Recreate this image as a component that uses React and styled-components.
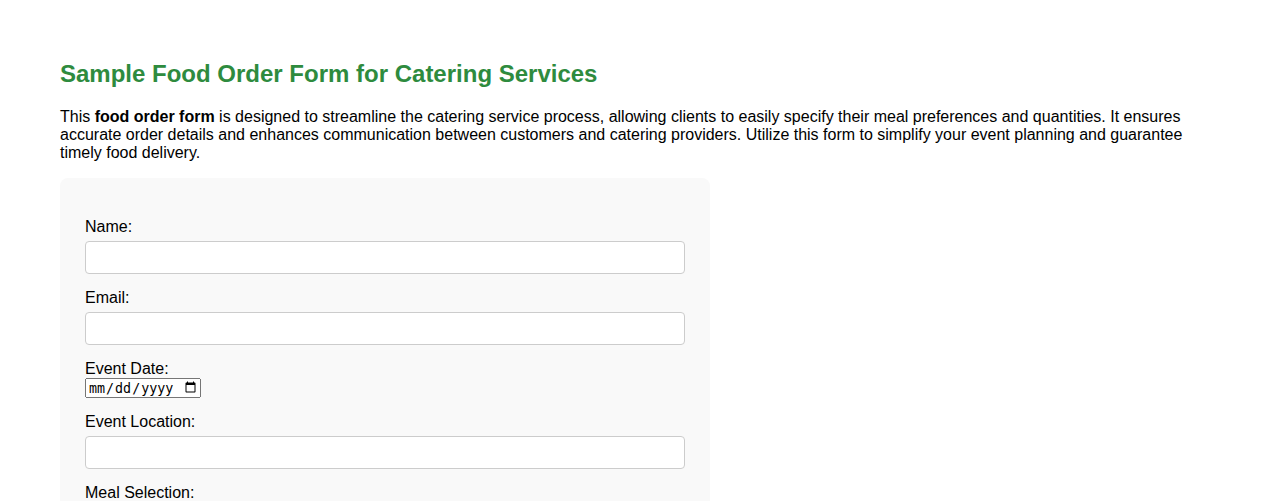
import React from "react";
import styled, { createGlobalStyle } from "styled-components";

const GlobalStyle = createGlobalStyle`
  body {
    margin: 0;
    background: #ffffff;
    font-family: "Liberation Sans", Arial, sans-serif;
    color: #000;
  }
`;

const Page = styled.div`
  padding: 40px 60px;
`;

const Title = styled.h2`
  margin: 20px 0;
  font-size: 24px;
  font-weight: bold;
  color: #2e8b3e;
`;

const Intro = styled.p`
  margin: 16px 0;
  font-size: 16px;
  line-height: normal;
`;

const OrderForm = styled.form`
  max-width: 600px;
  padding: 25px;
  background: #f9f9f9;
  border-radius: 8px;
`;

const Label = styled.label`
  display: block;
  margin: 15px 0 5px;
  font-size: 16px;
`;

const TextInput = styled.input`
  display: block;
  box-sizing: border-box;
  width: 100%;
  height: 33px;
  padding: 8px;
  border: 1px solid #ccc;
  border-radius: 4px;
  background: #fff;
  font-size: 13.33px;
  font-family: "Liberation Sans", Arial, sans-serif;
`;

const DateInput = styled.input`
  display: block;
  margin-top: -5px;
  width: 116px;
  height: 20px;
  box-sizing: border-box;
`;

const Select = styled.select`
  display: block;
  box-sizing: border-box;
  width: 100%;
  height: 33px;
  padding: 8px;
  border: 1px solid #ccc;
  border-radius: 4px;
  background: #fff;
  font-size: 13.33px;
`;

const fields = [
  { id: "name", label: "Name:", type: "text" },
  { id: "email", label: "Email:", type: "email" },
];

export default function App() {
  return (
    <Page>
      <GlobalStyle />
      <Title>Sample Food Order Form for Catering Services</Title>
      <Intro>
        This <b>food order form</b> is designed to streamline the catering service process,
        allowing clients to easily specify their meal preferences and quantities. It ensures
        accurate order details and enhances communication between customers and catering
        providers. Utilize this form to simplify your event planning and guarantee timely food
        delivery.
      </Intro>
      <OrderForm onSubmit={(e) => e.preventDefault()}>
        {fields.map((f) => (
          <React.Fragment key={f.id}>
            <Label htmlFor={f.id}>{f.label}</Label>
            <TextInput id={f.id} type={f.type} />
          </React.Fragment>
        ))}
        <Label htmlFor="date">Event Date:</Label>
        <DateInput id="date" type="date" />
        <Label htmlFor="location">Event Location:</Label>
        <TextInput id="location" type="text" />
        <Label htmlFor="meal">Meal Selection:</Label>
        <Select id="meal">
          <option>Buffet</option>
          <option>Plated</option>
          <option>Family Style</option>
        </Select>
      </OrderForm>
    </Page>
  );
}
